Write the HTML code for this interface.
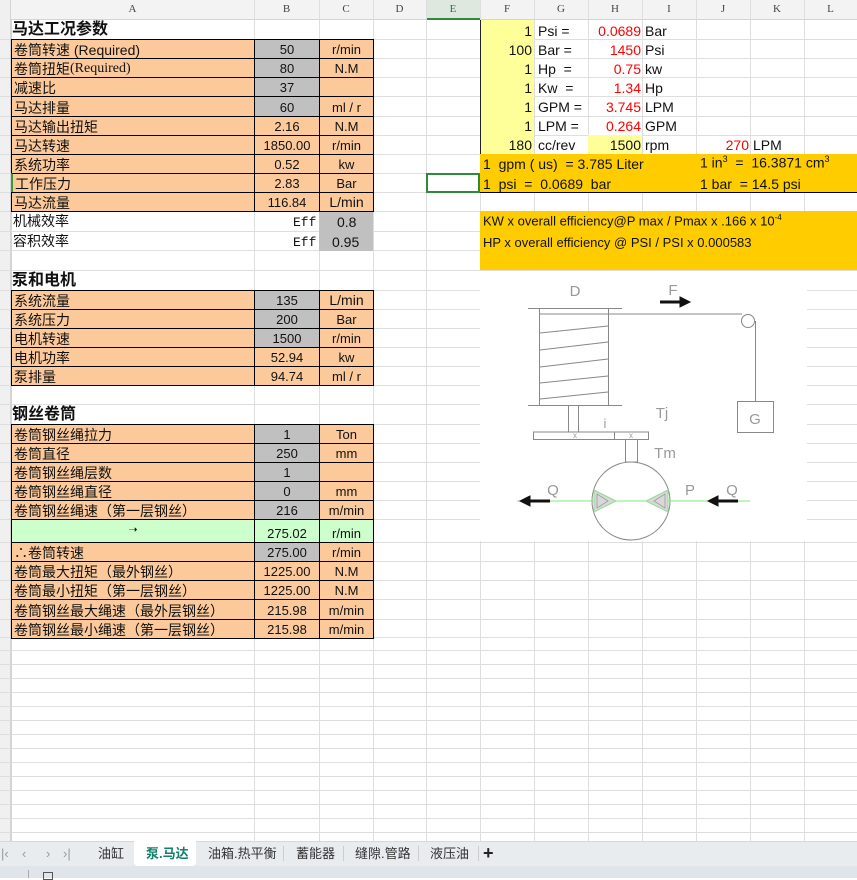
<!DOCTYPE html>
<html><head><meta charset="utf-8"><style>
*{margin:0;padding:0}
body{width:857px;height:878px;position:relative;overflow:hidden;background:#fff;font-family:"Liberation Sans","Noto Sans CJK SC",sans-serif;}
.h{position:absolute;left:0;width:857px;height:1px;background:#dedede}
.v{position:absolute;top:0;width:1px;height:841px;background:#dedede}
.c{position:absolute;box-sizing:border-box;border:1px solid #000;display:flex;align-items:flex-end;justify-content:center;font-size:13px;line-height:1;padding-bottom:2px;color:#111;white-space:nowrap;overflow:hidden}
.o{background:#fcc99b}.g{background:#c0c0c0}.gr{background:#ccffcc}
.a{justify-content:flex-start;padding-left:2px;font-size:14px;padding-bottom:1px}
.t{position:absolute;white-space:nowrap;line-height:1;color:#111}
.hd{position:absolute;top:0;height:19px;font-family:"Liberation Serif",serif;font-size:11px;color:#444;text-align:center;line-height:19px;background:#f3f3f3}
.r{color:#f00}
.nv{position:absolute;top:846px;font-size:13px;color:#999}
</style></head><body>
<div style="position:absolute;left:0;top:0;width:857px;height:19px;background:#f3f3f3;border-bottom:1px solid #d4d4d4"></div>
<div style="position:absolute;left:0;top:0;width:11px;height:841px;background:#f0f0f0;border-right:1px solid #d4d4d4"></div>
<div class="hd" style="left:11px;width:243px">A</div>
<div class="hd" style="left:254px;width:65px">B</div>
<div class="hd" style="left:319px;width:54px">C</div>
<div class="hd" style="left:373px;width:53px">D</div>
<div class="hd" style="left:426px;width:54px;background:#dfe8df;color:#1e7a3a;border-bottom:2px solid #2e8b3e;height:18px">E</div>
<div class="hd" style="left:480px;width:54px">F</div>
<div class="hd" style="left:534px;width:54px">G</div>
<div class="hd" style="left:588px;width:54px">H</div>
<div class="hd" style="left:642px;width:54px">I</div>
<div class="hd" style="left:696px;width:54px">J</div>
<div class="hd" style="left:750px;width:54px">K</div>
<div class="hd" style="left:804px;width:53px">L</div>
<div class="v" style="left:254px"></div><div class="v" style="left:319px"></div><div class="v" style="left:373px"></div><div class="v" style="left:426px"></div><div class="v" style="left:480px"></div><div class="v" style="left:534px"></div><div class="v" style="left:588px"></div><div class="v" style="left:642px"></div><div class="v" style="left:696px"></div><div class="v" style="left:750px"></div><div class="v" style="left:804px"></div>
<div class="h" style="top:39px"></div><div class="h" style="top:58px"></div><div class="h" style="top:77px"></div><div class="h" style="top:96px"></div><div class="h" style="top:116px"></div><div class="h" style="top:135px"></div><div class="h" style="top:154px"></div><div class="h" style="top:173px"></div><div class="h" style="top:192px"></div><div class="h" style="top:211px"></div><div class="h" style="top:231px"></div><div class="h" style="top:250px"></div><div class="h" style="top:270px"></div><div class="h" style="top:290px"></div><div class="h" style="top:309px"></div><div class="h" style="top:328px"></div><div class="h" style="top:347px"></div><div class="h" style="top:366px"></div><div class="h" style="top:385px"></div><div class="h" style="top:404px"></div><div class="h" style="top:424px"></div><div class="h" style="top:443px"></div><div class="h" style="top:462px"></div><div class="h" style="top:481px"></div><div class="h" style="top:500px"></div><div class="h" style="top:519px"></div><div class="h" style="top:542px"></div><div class="h" style="top:561px"></div><div class="h" style="top:580px"></div><div class="h" style="top:599px"></div><div class="h" style="top:619px"></div><div class="h" style="top:637px"></div>
<div style="position:absolute;left:0;top:637px;width:857px;height:204px;background:repeating-linear-gradient(to bottom,transparent 0,transparent 13px,#dedede 13px,#dedede 14px)"></div>
<div style="position:absolute;left:0;top:0;width:11px;height:841px;border-right:1px solid #d4d4d4;box-sizing:border-box"></div>

<div class="t" style="left:12px;top:22px;font-size:16px;font-weight:bold">马达工况参数</div>
<div class="c o a" style="left:11px;top:39px;width:244px;height:20px">卷筒转速 (Required)</div>
<div class="c g" style="left:254px;top:39px;width:66px;height:20px">50</div>
<div class="c o" style="left:319px;top:39px;width:55px;height:20px">r/min</div>
<div class="c o a" style="left:11px;top:58px;width:244px;height:20px">卷筒扭矩<span style="font-family:'Liberation Serif',serif;font-size:14px">(Required)</span></div>
<div class="c g" style="left:254px;top:58px;width:66px;height:20px">80</div>
<div class="c o" style="left:319px;top:58px;width:55px;height:20px">N.M</div>
<div class="c o a" style="left:11px;top:77px;width:244px;height:20px">减速比</div>
<div class="c g" style="left:254px;top:77px;width:66px;height:20px">37</div>
<div class="c o" style="left:319px;top:77px;width:55px;height:20px"></div>
<div class="c o a" style="left:11px;top:96px;width:244px;height:21px">马达排量</div>
<div class="c g" style="left:254px;top:96px;width:66px;height:21px">60</div>
<div class="c o" style="left:319px;top:96px;width:55px;height:21px">ml / r</div>
<div class="c o a" style="left:11px;top:116px;width:244px;height:20px">马达输出扭矩</div>
<div class="c o" style="left:254px;top:116px;width:66px;height:20px">2.16</div>
<div class="c o" style="left:319px;top:116px;width:55px;height:20px">N.M</div>
<div class="c o a" style="left:11px;top:135px;width:244px;height:20px">马达转速</div>
<div class="c o" style="left:254px;top:135px;width:66px;height:20px">1850.00</div>
<div class="c o" style="left:319px;top:135px;width:55px;height:20px">r/min</div>
<div class="c o a" style="left:11px;top:154px;width:244px;height:20px">系统功率</div>
<div class="c o" style="left:254px;top:154px;width:66px;height:20px">0.52</div>
<div class="c o" style="left:319px;top:154px;width:55px;height:20px">kw</div>
<div class="c o a" style="left:11px;top:173px;width:244px;height:20px;border-left:2px solid #3a9a3a">工作压力</div>
<div class="c o" style="left:254px;top:173px;width:66px;height:20px">2.83</div>
<div class="c o" style="left:319px;top:173px;width:55px;height:20px">Bar</div>
<div class="c o a" style="left:11px;top:192px;width:244px;height:20px">马达流量</div>
<div class="c o" style="left:254px;top:192px;width:66px;height:20px">116.84</div>
<div class="c o" style="left:319px;top:192px;width:55px;height:20px;font-size:14px">L/min</div>
<div class="t" style="left:13px;top:214px;font-size:14px">机械效率</div>
<div class="t" style="left:13px;top:234px;font-size:14px">容积效率</div>
<div class="t" style="left:293px;top:216px;font-size:13px;font-family:'Liberation Mono',monospace">Eff</div>
<div class="t" style="left:293px;top:236px;font-size:13px;font-family:'Liberation Mono',monospace">Eff</div>
<div style="position:absolute;left:319px;top:212px;width:54px;height:39px;background:#c0c0c0"></div>
<div class="t" style="left:337px;top:215px;font-size:14px">0.8</div>
<div class="t" style="left:332px;top:235px;font-size:14px">0.95</div>

<div class="t" style="left:12px;top:273px;font-size:16px;font-weight:bold">泵和电机</div>
<div class="c o a" style="left:11px;top:290px;width:244px;height:20px">系统流量</div>
<div class="c g" style="left:254px;top:290px;width:66px;height:20px">135</div>
<div class="c o" style="left:319px;top:290px;width:55px;height:20px;font-size:14px">L/min</div>
<div class="c o a" style="left:11px;top:309px;width:244px;height:20px">系统压力</div>
<div class="c g" style="left:254px;top:309px;width:66px;height:20px">200</div>
<div class="c o" style="left:319px;top:309px;width:55px;height:20px">Bar</div>
<div class="c o a" style="left:11px;top:328px;width:244px;height:20px">电机转速</div>
<div class="c g" style="left:254px;top:328px;width:66px;height:20px">1500</div>
<div class="c o" style="left:319px;top:328px;width:55px;height:20px">r/min</div>
<div class="c o a" style="left:11px;top:347px;width:244px;height:20px">电机功率</div>
<div class="c o" style="left:254px;top:347px;width:66px;height:20px">52.94</div>
<div class="c o" style="left:319px;top:347px;width:55px;height:20px">kw</div>
<div class="c o a" style="left:11px;top:366px;width:244px;height:20px">泵排量</div>
<div class="c o" style="left:254px;top:366px;width:66px;height:20px">94.74</div>
<div class="c o" style="left:319px;top:366px;width:55px;height:20px">ml / r</div>

<div class="t" style="left:12px;top:407px;font-size:16px;font-weight:bold">钢丝卷筒</div>
<div class="c o a" style="left:11px;top:424px;width:244px;height:20px">卷筒钢丝绳拉力</div>
<div class="c g" style="left:254px;top:424px;width:66px;height:20px">1</div>
<div class="c o" style="left:319px;top:424px;width:55px;height:20px">Ton</div>
<div class="c o a" style="left:11px;top:443px;width:244px;height:20px">卷筒直径</div>
<div class="c g" style="left:254px;top:443px;width:66px;height:20px">250</div>
<div class="c o" style="left:319px;top:443px;width:55px;height:20px">mm</div>
<div class="c o a" style="left:11px;top:462px;width:244px;height:20px">卷筒钢丝绳层数</div>
<div class="c g" style="left:254px;top:462px;width:66px;height:20px">1</div>
<div class="c o" style="left:319px;top:462px;width:55px;height:20px"></div>
<div class="c o a" style="left:11px;top:481px;width:244px;height:20px">卷筒钢丝绳直径</div>
<div class="c g" style="left:254px;top:481px;width:66px;height:20px">0</div>
<div class="c o" style="left:319px;top:481px;width:55px;height:20px">mm</div>
<div class="c o a" style="left:11px;top:500px;width:244px;height:20px">卷筒钢丝绳速（第一层钢丝）</div>
<div class="c g" style="left:254px;top:500px;width:66px;height:20px">216</div>
<div class="c o" style="left:319px;top:500px;width:55px;height:20px">m/min</div>
<div class="c gr" style="left:11px;top:519px;width:244px;height:24px;align-items:center;font-size:11px">&#x279D;</div>
<div class="c gr" style="left:254px;top:519px;width:66px;height:24px">275.02</div>
<div class="c gr" style="left:319px;top:519px;width:55px;height:24px">r/min</div>
<div class="c o a" style="left:11px;top:542px;width:244px;height:20px">∴卷筒转速</div>
<div class="c g" style="left:254px;top:542px;width:66px;height:20px">275.00</div>
<div class="c o" style="left:319px;top:542px;width:55px;height:20px">r/min</div>
<div class="c o a" style="left:11px;top:561px;width:244px;height:20px">卷筒最大扭矩（最外钢丝）</div>
<div class="c o" style="left:254px;top:561px;width:66px;height:20px">1225.00</div>
<div class="c o" style="left:319px;top:561px;width:55px;height:20px">N.M</div>
<div class="c o a" style="left:11px;top:580px;width:244px;height:20px">卷筒最小扭矩（第一层钢丝）</div>
<div class="c o" style="left:254px;top:580px;width:66px;height:20px">1225.00</div>
<div class="c o" style="left:319px;top:580px;width:55px;height:20px">N.M</div>
<div class="c o a" style="left:11px;top:599px;width:244px;height:21px">卷筒钢丝最大绳速（最外层钢丝）</div>
<div class="c o" style="left:254px;top:599px;width:66px;height:21px">215.98</div>
<div class="c o" style="left:319px;top:599px;width:55px;height:21px">m/min</div>
<div class="c o a" style="left:11px;top:619px;width:244px;height:20px">卷筒钢丝最小绳速（第一层钢丝）</div>
<div class="c o" style="left:254px;top:619px;width:66px;height:20px">215.98</div>
<div class="c o" style="left:319px;top:619px;width:55px;height:20px">m/min</div>

<div style="position:absolute;left:480px;top:20px;width:54px;height:134px;background:#ffff99"></div>
<div style="position:absolute;left:588px;top:135px;width:54px;height:19px;background:#ffff99"></div>
<div style="position:absolute;left:480px;top:20px;width:1px;height:173px;background:#222"></div>
<div style="position:absolute;left:426px;top:173px;width:54px;height:20px;box-sizing:border-box;border:2px solid #2e8b3e"></div>
<div style="font-size:14px">
<div class="t" style="right:325px;top:24px">1</div><div class="t" style="left:538px;top:24px">Psi =</div><div class="t r" style="right:216px;top:24px">0.0689</div><div class="t" style="left:645px;top:24px">Bar</div>
<div class="t" style="right:325px;top:43px">100</div><div class="t" style="left:538px;top:43px">Bar =</div><div class="t r" style="right:216px;top:43px">1450</div><div class="t" style="left:645px;top:43px">Psi</div>
<div class="t" style="right:325px;top:62px">1</div><div class="t" style="left:538px;top:62px">Hp&nbsp; =</div><div class="t r" style="right:216px;top:62px">0.75</div><div class="t" style="left:645px;top:62px">kw</div>
<div class="t" style="right:325px;top:81px">1</div><div class="t" style="left:538px;top:81px">Kw&nbsp; =</div><div class="t r" style="right:216px;top:81px">1.34</div><div class="t" style="left:645px;top:81px">Hp</div>
<div class="t" style="right:325px;top:100px">1</div><div class="t" style="left:538px;top:100px">GPM =</div><div class="t r" style="right:216px;top:100px">3.745</div><div class="t" style="left:645px;top:100px">LPM</div>
<div class="t" style="right:325px;top:119px">1</div><div class="t" style="left:538px;top:119px">LPM =</div><div class="t r" style="right:216px;top:119px">0.264</div><div class="t" style="left:645px;top:119px">GPM</div>
<div class="t" style="right:325px;top:138px">180</div><div class="t" style="left:538px;top:138px">cc/rev</div><div class="t" style="right:216px;top:138px">1500</div><div class="t" style="left:645px;top:138px">rpm</div><div class="t r" style="right:108px;top:138px">270</div><div class="t" style="left:753px;top:138px">LPM</div>
</div>
<div style="position:absolute;left:480px;top:154px;width:377px;height:38px;background:#ffcc00;border-bottom:1px solid #000"></div>
<div class="t" style="left:483px;top:157px;font-size:14px">1&nbsp; gpm ( us)&nbsp; = 3.785 Liter</div>
<div class="t" style="left:700px;top:155px;font-size:14px">1 in<sup style="font-size:9px">3</sup>&nbsp; =&nbsp; 16.3871 cm<sup style="font-size:9px">3</sup></div>
<div class="t" style="left:483px;top:177px;font-size:14px">1&nbsp; psi&nbsp; =&nbsp; 0.0689&nbsp; bar</div>
<div class="t" style="left:700px;top:177px;font-size:14px">1 bar&nbsp; = 14.5 psi</div>
<div style="position:absolute;left:480px;top:211px;width:377px;height:59px;background:#ffcc00"></div>
<div class="t" style="left:483px;top:214px;font-size:13px">KW x overall efficiency@P max / Pmax x .166 x 10<sup style="font-size:8px">-4</sup></div>
<div class="t" style="left:483px;top:236px;font-size:13px">HP x overall efficiency @ PSI / PSI x 0.000583</div>

<svg style="position:absolute;left:480px;top:270px" width="328" height="272" viewBox="0 0 328 272">
<rect x="0" y="1" width="327" height="270" fill="#fff"/>
<g fill="none" stroke="#888" stroke-width="1">
<line x1="48" y1="38.5" x2="142" y2="38.5"/>
<line x1="48" y1="135.5" x2="142" y2="135.5"/>
<rect x="59.5" y="38.5" width="69" height="97"/>
<line x1="59.5" y1="44" x2="262" y2="44"/>
<line x1="60" y1="63" x2="128" y2="56"/><line x1="60" y1="80" x2="128" y2="72"/><line x1="60" y1="97" x2="128" y2="89"/><line x1="60" y1="113" x2="128" y2="106"/><line x1="60" y1="129" x2="128" y2="122"/>
<circle cx="268" cy="51" r="6.5"/>
<line x1="275.5" y1="51" x2="275.5" y2="131"/>
<rect x="257.5" y="131.5" width="36" height="31"/>
<rect x="88.5" y="135.5" width="10" height="26.5"/>
<rect x="53.5" y="162" width="115" height="7.5"/>
<line x1="134.5" y1="162" x2="134.5" y2="169.5"/>
<rect x="145.5" y="169.5" width="12" height="22.5"/>
<circle cx="151" cy="231" r="39"/>
</g>
<g font-family="'Liberation Sans',sans-serif" fill="#999" font-size="15" text-anchor="middle">
<text x="95" y="26">D</text><text x="193" y="25">F</text><text x="275" y="154">G</text>
<text x="182" y="148">Tj</text><text x="125" y="158" font-size="13">i</text>
<text x="185" y="188">Tm</text><text x="73" y="225">Q</text><text x="210" y="225">P</text><text x="252" y="225">Q</text>
<text x="95" y="168" font-size="8">x</text><text x="151" y="168" font-size="8">x</text>
</g>
<line x1="37" y1="231" x2="270" y2="231" stroke="#7de87d" stroke-width="1"/>
<g stroke="#8fe08f" fill="#d8d8d8" stroke-width="1">
<polygon points="114,220 136,231 114,242"/><polygon points="188,220 166,231 188,242"/>
</g>
<g stroke="#888" fill="none" stroke-width="0.6">
<polygon points="117,224 128,231 117,238"/><polygon points="185,224 174,231 185,238"/>
</g>
<g fill="#111" stroke="#111">
<line x1="180" y1="32" x2="200" y2="32" stroke-width="3"/><polygon points="200,27 210,32 200,37"/>
<line x1="70" y1="231" x2="50" y2="231" stroke-width="3"/><polygon points="50,226 40,231 50,236"/>
<line x1="258" y1="231" x2="238" y2="231" stroke-width="3"/><polygon points="238,226 228,231 238,236"/>
</g>
</svg>

<div style="position:absolute;left:0;top:841px;width:857px;height:25px;background:#e8ecef;border-top:1px solid #d6d9dc"></div>
<div class="nv" style="left:1px">|‹</div>
<div class="nv" style="left:22px">‹</div>
<div class="nv" style="left:46px">›</div>
<div class="nv" style="left:63px">›|</div>
<div style="position:absolute;left:134px;top:841px;width:62px;height:25px;background:#fff;border-radius:0 0 4px 4px"></div>
<div class="t" style="left:98px;top:847px;font-size:13px;color:#333">油缸</div>
<div class="t" style="left:146px;top:847px;font-size:13px;color:#13806a;font-weight:bold">泵.马达</div>
<div class="t" style="left:208px;top:847px;font-size:13px;color:#333">油箱.热平衡</div>
<div style="position:absolute;left:283px;top:846px;width:1px;height:15px;background:#ccc"></div>
<div class="t" style="left:296px;top:847px;font-size:13px;color:#333">蓄能器</div>
<div style="position:absolute;left:343px;top:846px;width:1px;height:15px;background:#ccc"></div>
<div class="t" style="left:355px;top:847px;font-size:13px;color:#333">缝隙.管路</div>
<div style="position:absolute;left:418px;top:846px;width:1px;height:15px;background:#ccc"></div>
<div class="t" style="left:430px;top:847px;font-size:13px;color:#333">液压油</div>
<div style="position:absolute;left:478px;top:846px;width:1px;height:15px;background:#ccc"></div>
<div class="t" style="left:483px;top:844px;font-size:18px;font-weight:bold;color:#222">+</div>
<div style="position:absolute;left:0;top:866px;width:857px;height:12px;background:#dfe5ea"></div>
<div style="position:absolute;left:28px;top:870px;width:1px;height:8px;background:#aaa"></div>
<div style="position:absolute;left:43px;top:872px;width:10px;height:8px;border:1px solid #555;box-sizing:border-box"></div>
</body></html>
